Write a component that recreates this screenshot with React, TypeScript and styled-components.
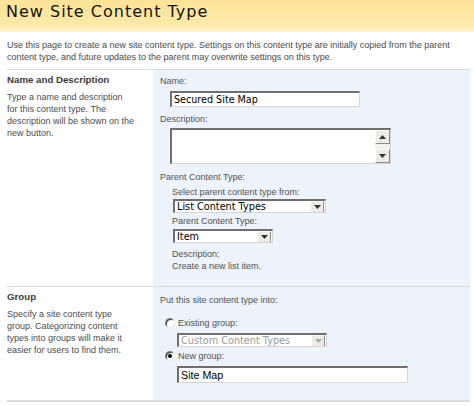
import React from "react";
import styled, { createGlobalStyle, css } from "styled-components";

const Global = createGlobalStyle`
  html, body { margin: 0; padding: 0; background: #fff; }
  body { font-family: "Liberation Sans", Arial, sans-serif; }
  * { box-sizing: border-box; }
`;

const Page = styled.div`
  width: 474px;
  height: 406px;
  overflow: hidden;
  background: #fff;
`;

const Header = styled.div`
  height: 32px;
  padding: 1px 0 0 6px;
  background: linear-gradient(#fde397 0%, #fde8a6 70%, #fff2cb 100%);
`;

const Title = styled.h1`
  margin: 0;
  font-family: "DejaVu Sans", Verdana, sans-serif;
  font-weight: normal;
  font-size: 16px;
  letter-spacing: 1px;
  line-height: 21px;
  color: #141414;
`;

const Intro = styled.p`
  margin: 0 4px 0 7px;
  padding: 7px 0 6px 0;
  font-size: 9px;
  line-height: 12px;
  color: #4a4a4a;
  border-bottom: 1px solid #d6dbe3;
`;

const Section = styled.div<{ $last?: boolean }>`
  display: grid;
  grid-template-columns: 146px 1fr;
  margin: 0 4px 0 7px;
  border-bottom: ${(p) => (p.$last ? "2px solid #d9dadc" : "1px solid #d6dbe3")};
`;

const Side = styled.div`
  padding: 4px 6px 0 0;
`;

const SideHeading = styled.div`
  font-weight: bold;
  font-size: 9.7px;
  line-height: 12px;
  color: #3c3c3c;
`;

const SideText = styled.div`
  margin-top: 5px;
  font-size: 9px;
  line-height: 12px;
  color: #4c4c4c;
`;

const Panel = styled.div<{ $h: number }>`
  background: #edf3fd;
  height: ${(p) => p.$h}px;
  padding: 5px 0 0 7px;
  display: flex;
  flex-direction: column;
  align-items: flex-start;
`;

const Label = styled.div<{ $mt?: number; $indent?: number }>`
  font-size: 9px;
  line-height: 12px;
  color: #525252;
  margin-top: ${(p) => p.$mt ?? 0}px;
  margin-left: ${(p) => p.$indent ?? 0}px;
`;

const bevel = css`
  background: #fff;
  border-top: 2px solid #6f6f6f;
  border-left: 2px solid #6f6f6f;
  border-right: 1px solid #d4d4d4;
  border-bottom: 1px solid #d4d4d4;
`;

const TextInput = styled.div<{ $w: number; $h: number; $mt: number; $indent: number; $arial?: boolean }>`
  ${bevel};
  width: ${(p) => p.$w}px;
  height: ${(p) => p.$h}px;
  margin-top: ${(p) => p.$mt}px;
  margin-left: ${(p) => p.$indent}px;
  padding-left: 2px;
  font-family: ${(p) => (p.$arial ? `"Liberation Sans", Arial, sans-serif` : `"DejaVu Sans", Verdana, sans-serif`)};
  font-size: ${(p) => (p.$arial ? "10.7px" : "9.6px")};
  line-height: ${(p) => p.$h - 3}px;
  color: #000;
  white-space: nowrap;
`;

const TextArea = styled.div`
  ${bevel};
  width: 221px;
  height: 36px;
  margin: 3px 0 0 10px;
  display: flex;
  justify-content: flex-end;
`;

const ScrollBar = styled.div`
  width: 15px;
  display: flex;
  flex-direction: column;
  justify-content: space-between;
  background: #f1f0ec;
`;

const SmallButton = styled.div<{ $disabled?: boolean }>`
  width: 15px;
  height: 14px;
  background: #ecebe6;
  border-top: 1px solid #fbfbfb;
  border-left: 1px solid #fbfbfb;
  border-right: 1px solid #8d8d8d;
  border-bottom: 1px solid #8d8d8d;
  display: flex;
  align-items: center;
  justify-content: center;
  color: ${(p) => (p.$disabled ? "#a8a8a8" : "#333")};
  flex: none;
`;

const Arrow = ({ up }: { up?: boolean }) => (
  <svg width="7" height="4" viewBox="0 0 7 4">
    <polygon points={up ? "0,4 7,4 3.5,0" : "0,0 7,0 3.5,4"} fill="currentColor" />
  </svg>
);

const Select = styled.div<{ $w: number; $mt: number; $indent: number; $disabled?: boolean }>`
  ${bevel};
  width: ${(p) => p.$w}px;
  height: 14px;
  margin-top: ${(p) => p.$mt}px;
  margin-left: ${(p) => p.$indent}px;
  display: flex;
  align-items: center;
  justify-content: space-between;
  font-family: "DejaVu Sans", Verdana, sans-serif;
  font-size: 9.7px;
  color: ${(p) => (p.$disabled ? "#9a9a9a" : "#000")};
  padding-left: 2px;
  white-space: nowrap;
  overflow: hidden;
  ${SmallButton} {
    height: 12px;
    width: 14px;
    margin-right: 1px;
  }
`;

const RadioRow = styled.div<{ $mt: number }>`
  display: flex;
  align-items: center;
  gap: 3px;
  margin: ${(p) => p.$mt}px 0 0 5px;
  font-size: 9px;
  line-height: 12px;
  color: #525252;
`;

const Radio = styled.span<{ $checked?: boolean }>`
  width: 10px;
  height: 10px;
  border-radius: 50%;
  background: #fff;
  border: 1px solid;
  border-color: #7b7b7b #e8e8e8 #e8e8e8 #7b7b7b;
  box-shadow: inset 1px 1px 0 #3a3a3a;
  display: flex;
  align-items: center;
  justify-content: center;
  &::after {
    content: "";
    width: 4px;
    height: 4px;
    border-radius: 50%;
    background: ${(p) => (p.$checked ? "#000" : "transparent")};
  }
`;

export default function App() {
  return (
    <Page>
      <Global />
      <Header>
        <Title>New Site Content Type</Title>
      </Header>
      <Intro>
        Use this page to create a new site content type. Settings on this content type are initially copied from the parent
        <br />
        content type, and future updates to the parent may overwrite settings on this type.
      </Intro>

      <Section>
        <Side>
          <SideHeading>Name and Description</SideHeading>
          <SideText>
            Type a name and description
            <br />
            for this content type. The
            <br />
            description will be shown on the
            <br />
            new button.
          </SideText>
        </Side>
        <Panel $h={216}>
          <Label>Name:</Label>
          <TextInput $w={190} $h={16} $mt={4} $indent={10}>
            Secured Site Map
          </TextInput>
          <Label $mt={6}>Description:</Label>
          <TextArea>
            <ScrollBar>
              <SmallButton>
                <Arrow up />
              </SmallButton>
              <SmallButton>
                <Arrow />
              </SmallButton>
            </ScrollBar>
          </TextArea>
          <Label $mt={7}>Parent Content Type:</Label>
          <Label $mt={3} $indent={12}>
            Select parent content type from:
          </Label>
          <Select $w={153} $mt={1} $indent={13}>
            List Content Types
            <SmallButton>
              <Arrow />
            </SmallButton>
          </Select>
          <Label $mt={2} $indent={12}>
            Parent Content Type:
          </Label>
          <Select $w={100} $mt={2} $indent={13}>
            Item
            <SmallButton>
              <Arrow />
            </SmallButton>
          </Select>
          <Label $mt={5} $indent={12}>
            Description:
            <br />
            Create a new list item.
          </Label>
        </Panel>
      </Section>

      <Section $last>
        <Side>
          <SideHeading>Group</SideHeading>
          <SideText>
            Specify a site content type
            <br />
            group. Categorizing content
            <br />
            types into groups will make it
            <br />
            easier for users to find them.
          </SideText>
        </Side>
        <Panel $h={113}>
          <Label $mt={2}>Put this site content type into:</Label>
          <RadioRow $mt={11}>
            <Radio />
            Existing group:
          </RadioRow>
          <Select $w={150} $mt={4} $indent={17} $disabled>
            Custom Content Types
            <SmallButton $disabled>
              <Arrow />
            </SmallButton>
          </Select>
          <RadioRow $mt={3}>
            <Radio $checked />
            New group:
          </RadioRow>
          <TextInput $w={231} $h={17} $mt={4} $indent={17} $arial>
            Site Map
          </TextInput>
        </Panel>
      </Section>
    </Page>
  );
}
